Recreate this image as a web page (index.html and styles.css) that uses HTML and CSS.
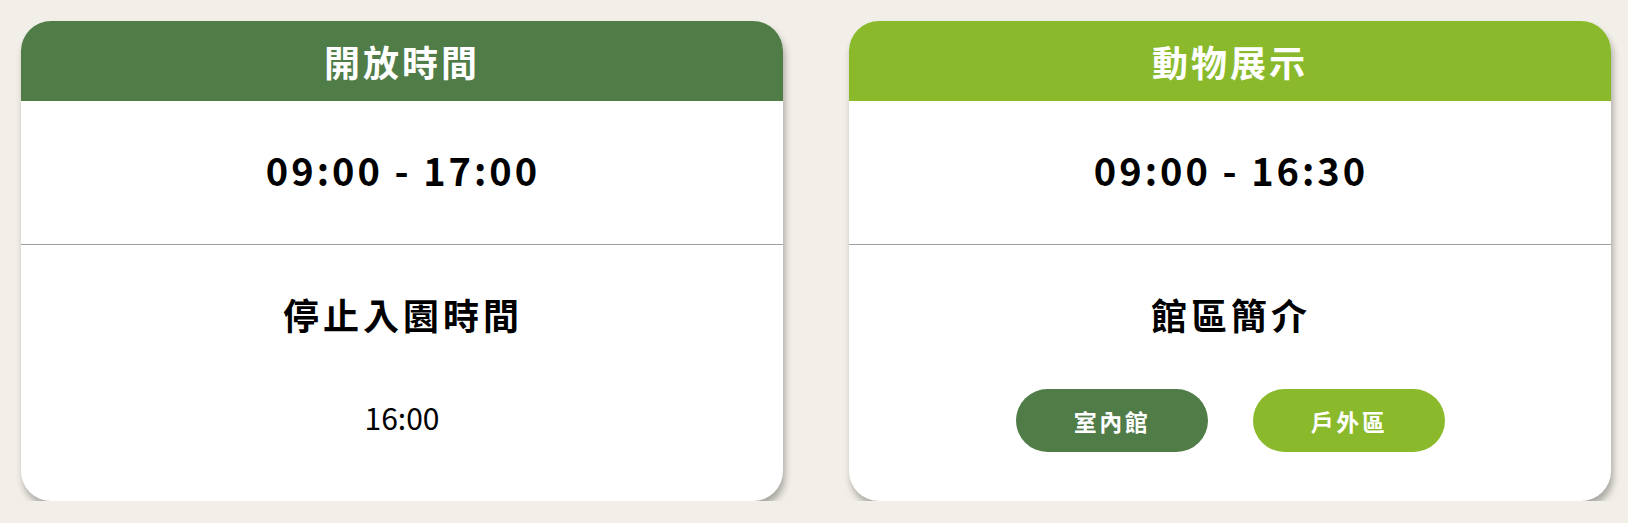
FILE: index.html
```html
<!DOCTYPE html>
<html lang="zh-Hant">
<head>
    <meta charset="UTF-8">
    <meta name="viewport" content="width=device-width, initial-scale=1.0">
    <title>開放時間</title>
    <link rel="stylesheet" href="styles.css">
</head>
<body>
<div class="board">
    <div class="card">
        <div class="card-head dark">開放時間</div>
        <div class="card-time">09:00 - 17:00</div>
        <div class="card-body">
            <div class="card-title">停止入園時間</div>
            <div class="card-row">
                <span class="plain">16:00</span>
            </div>
        </div>
    </div>

    <div class="card">
        <div class="card-head light">動物展示</div>
        <div class="card-time">09:00 - 16:30</div>
        <div class="card-body">
            <div class="card-title">館區簡介</div>
            <div class="card-row">
                <button class="pill dark">室內館</button>
                <button class="pill light">戶外區</button>
            </div>
        </div>
    </div>
</div>
</body>
</html>
```

FILE: styles.css
```css
body {
    margin: 0;
    background: #f2efe8;
    font-family: "Noto Sans CJK TC", "Noto Sans", sans-serif;
    color: #000;
}

.board {
    display: flex;
    gap: 66px;
    padding: 21px 17px 0 21px;
}

.card {
    flex: 1;
    height: 480px;
    background: #fff;
    border-radius: 30px;
    overflow: hidden;
    box-shadow: 2px 6px 7px rgba(0, 0, 0, 0.3);
    display: flex;
    flex-direction: column;
}

.dark {
    background: #507c48;
}

.light {
    background: #8aba2c;
}

.card-head {
    height: 80px;
    display: flex;
    justify-content: center;
    align-items: center;
    color: #fff;
    font-size: 36px;
    font-weight: bold;
    letter-spacing: 3px;
}

.card-time {
    height: 137px;
    padding: 0 0 6px 2px;
    border-bottom: 1px solid #a0a0a0;
    display: flex;
    justify-content: center;
    align-items: center;
    font-size: 38px;
    font-weight: bold;
    letter-spacing: 3px;
}

.card-body {
    flex: 1;
    display: flex;
    flex-direction: column;
    align-items: center;
    padding-top: 42px;
}

.card-title {
    font-size: 36px;
    line-height: 54px;
    font-weight: bold;
    letter-spacing: 4px;
    padding-left: 2px;
}

.card-row {
    margin-top: 48px;
    height: 63px;
    display: flex;
    justify-content: center;
    align-items: center;
    gap: 45px;
}

.plain {
    font-size: 30px;
    padding-bottom: 7px;
}

.pill {
    width: 192px;
    height: 63px;
    border: none;
    border-radius: 32px;
    color: #fff;
    font-family: inherit;
    font-size: 23px;
    font-weight: bold;
    letter-spacing: 2.5px;
    padding: 0 0 0 1px;
}
```
